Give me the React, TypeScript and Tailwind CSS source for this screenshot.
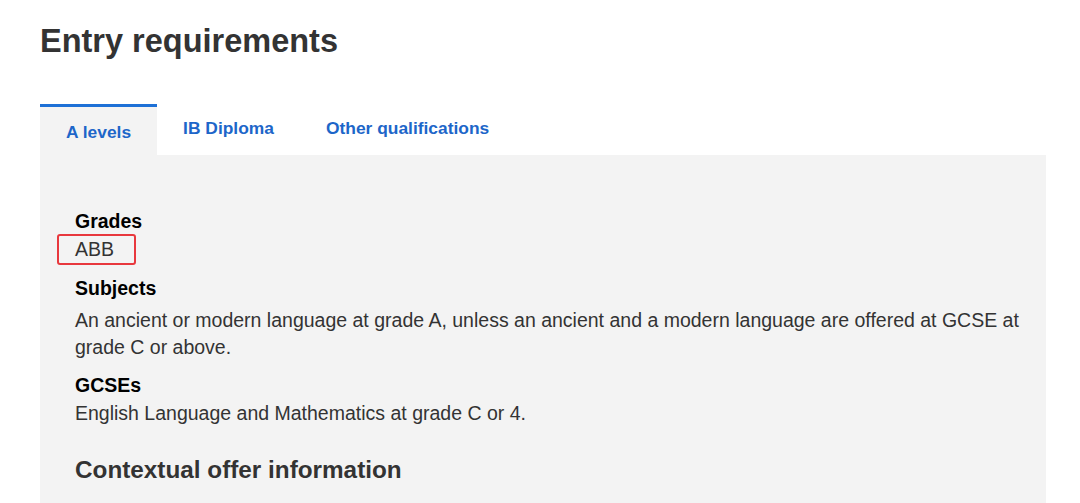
import React from "react";

export default function App() {
  return (
    <div
      className="min-h-[503px] w-[1080px] bg-white pl-[40px] text-[#333]"
      style={{ fontFamily: '"Liberation Sans", Arial, sans-serif' }}
    >
      <h1 className="pt-[19px] text-[32.5px] font-bold leading-[44px] text-[#333]">
        Entry requirements
      </h1>
      <div className="mt-[41px] flex h-[51px] w-[1006px]">
        <div className="border-t-[3px] border-[#1d70d6] bg-[#f3f3f3] px-[26px] pt-[15px] text-[17.4px] font-bold leading-[20px] text-[#1d66c9]">
          A levels
        </div>
        <div className="px-[26px] pt-[14px] text-[17.4px] font-bold leading-[20px] text-[#1d66c9]">
          IB Diploma
        </div>
        <div className="px-[26px] pt-[14px] text-[17.4px] font-bold leading-[20px] text-[#1d66c9]">
          Other qualifications
        </div>
      </div>
      <div className="h-[348px] w-[1006px] bg-[#f3f3f3] pl-[35px] pr-[20px] pt-[53px] text-[19.5px] leading-[27px]">
        <div className="font-bold text-black">Grades</div>
        <div className="relative mt-[1px]">
          <span className="text-[#333]">ABB</span>
          <div className="absolute left-[-18px] top-[-2px] h-[31px] w-[79px] rounded-[3px] border-2 border-[#e8383d]" />
        </div>
        <div className="mt-[12px] font-bold text-black">Subjects</div>
        <div className="mt-[5px]">
          An ancient or modern language at grade A, unless an ancient and a modern language are offered at GCSE at grade C or above.
        </div>
        <div className="mt-[11px] font-bold text-black">GCSEs</div>
        <div className="mt-[1px]">English Language and Mathematics at grade C or 4.</div>
        <h2 className="mt-[28px] text-[24.3px] font-bold leading-[30px] text-[#333]">
          Contextual offer information
        </h2>
      </div>
    </div>
  );
}
